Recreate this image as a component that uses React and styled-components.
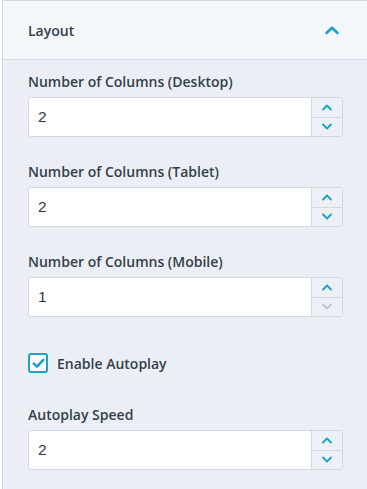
import React from 'react'
import styled, { createGlobalStyle } from 'styled-components'

const GlobalStyle = createGlobalStyle`
    html, body {
        margin: 0;
        padding: 0;
        background: #ffffff;
    }
    body {
        font-family: "Open Sans", "Lato", sans-serif;
    }
`

const fields = [
    { label: 'Number of Columns (Desktop)', value: '2' },
    { label: 'Number of Columns (Tablet)', value: '2' },
    { label: 'Number of Columns (Mobile)', value: '1', atMin: true },
]

function Chevron({ up, muted }) {
    return (
        <svg width="12" height="8" viewBox="0 0 12 8">
            <path
                d={up ? 'M2 6.5 L6 2.5 L10 6.5' : 'M2 1.5 L6 5.5 L10 1.5'}
                fill="none"
                stroke={muted ? '#b9c6d3' : '#1aa3c2'}
                strokeWidth="1.8"
                strokeLinecap="round"
                strokeLinejoin="round"
            />
        </svg>
    )
}

function NumberField({ label, value, atMin }) {
    return (
        <Field>
            <Label>{label}</Label>
            <InputBox>
                <Value>{value}</Value>
                <Spinner>
                    <SpinButton><Chevron up /></SpinButton>
                    <SpinButton><Chevron muted={atMin} /></SpinButton>
                </Spinner>
            </InputBox>
        </Field>
    )
}

function App() {
    return (
        <>
            <GlobalStyle />
            <Panel>
                <Header>
                    <Title>Layout</Title>
                    <svg width="16" height="10" viewBox="0 0 16 10">
                        <path d="M2.5 8 L8 2.8 L13.5 8" fill="none" stroke="#1aa3c2" strokeWidth="2.6" strokeLinecap="round" strokeLinejoin="round" />
                    </svg>
                </Header>
                <Body>
                    {fields.map((f, key) => (
                        <NumberField key={key} {...f} />
                    ))}
                    <CheckRow>
                        <CheckBox>
                            <svg width="13" height="11" viewBox="0 0 13 11">
                                <path d="M1.8 5.6 L5 8.6 L11.2 2" fill="none" stroke="#1aa3c2" strokeWidth="2.6" strokeLinecap="round" strokeLinejoin="round" />
                            </svg>
                        </CheckBox>
                        <CheckLabel>Enable Autoplay</CheckLabel>
                    </CheckRow>
                    <NumberField label="Autoplay Speed" value="2" />
                </Body>
            </Panel>
        </>
    )
}

export default App

const Panel = styled.div`
    margin-left: 2px;
    width: 365px;
    height: 489px;
    overflow: hidden;
    border-left: 1px solid #d3d9e2;
    border-top: 1px solid #d3d9e2;
    box-sizing: border-box;
    background: #ebeff5;
    display: flex;
    flex-direction: column;
`

const Header = styled.div`
    flex-shrink: 0;
    height: 59px;
    box-sizing: border-box;
    background: #f4f7fa;
    border-bottom: 1px solid #d3d9e2;
    display: flex;
    align-items: center;
    justify-content: space-between;
    padding: 0 27px 0 25px;
`

const Title = styled.div`
    font-size: 14px;
    font-weight: 600;
    color: #333f4b;
`

const Body = styled.div`
    padding: 13px 24px 0 25px;
    display: flex;
    flex-direction: column;
`

const Field = styled.div`
    display: flex;
    flex-direction: column;
    margin-bottom: 26px;
`

const Label = styled.div`
    font-size: 14px;
    font-weight: 600;
    color: #333f4b;
    line-height: 17px;
    margin-bottom: 7px;
`

const InputBox = styled.div`
    height: 40px;
    box-sizing: border-box;
    background: #ffffff;
    border: 1px solid #d3d9e2;
    border-radius: 3px;
    display: flex;
    overflow: hidden;
`

const Value = styled.div`
    flex: 1;
    display: flex;
    align-items: center;
    padding-left: 9px;
    font-family: "Liberation Sans", Arial, sans-serif;
    font-size: 15.5px;
    color: #2f3a45;
`

const Spinner = styled.div`
    width: 30px;
    border-left: 1px solid #d3d9e2;
    background: #edf1f6;
    display: flex;
    flex-direction: column;
`

const SpinButton = styled.div`
    flex: 1;
    display: flex;
    align-items: center;
    justify-content: center;

    & + & {
        border-top: 1px solid #d3d9e2;
    }
`

const CheckRow = styled.div`
    display: flex;
    align-items: center;
    gap: 9px;
    margin-top: 10px;
    margin-bottom: 33px;
`

const CheckBox = styled.div`
    width: 20px;
    height: 20px;
    box-sizing: border-box;
    border: 2px solid #1aa3c2;
    border-radius: 3px;
    background: #ffffff;
    display: flex;
    align-items: center;
    justify-content: center;
`

const CheckLabel = styled.div`
    font-size: 14px;
    font-weight: 600;
    color: #333f4b;
`
